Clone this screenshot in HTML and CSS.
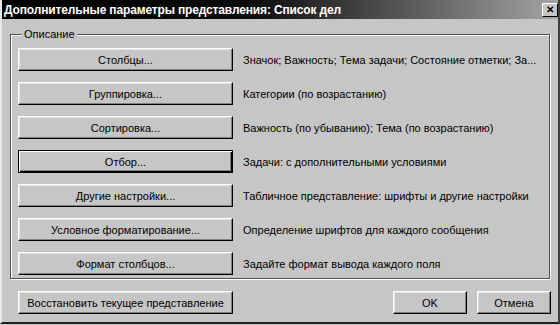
FILE: index.html
```html
<!DOCTYPE html>
<html lang="ru">
<head>
  <meta charset="UTF-8" />
  <title>Дополнительные параметры представления</title>
  <link rel="stylesheet" href="styles.css">
</head>
<body>
  <div class="window">
    <div class="titlebar">
      <span class="title">Дополнительные параметры представления: Список дел</span>
      <span class="close">✕</span>
    </div>

    <div class="content">
      <fieldset class="group">
        <legend>Описание</legend>
        <div class="row">
          <button class="btn wide">Столбцы...</button>
          <span class="desc">Значок; Важность; Тема задачи; Состояние отметки; За...</span>
        </div>
        <div class="row">
          <button class="btn wide">Группировка...</button>
          <span class="desc">Категории (по возрастанию)</span>
        </div>
        <div class="row">
          <button class="btn wide">Сортировка...</button>
          <span class="desc">Важность (по убыванию); Тема (по возрастанию)</span>
        </div>
        <div class="row">
          <button class="btn wide default">Отбор...</button>
          <span class="desc">Задачи: с дополнительными условиями</span>
        </div>
        <div class="row">
          <button class="btn wide">Другие настройки...</button>
          <span class="desc">Табличное представление: шрифты и другие настройки</span>
        </div>
        <div class="row">
          <button class="btn wide">Условное форматирование...</button>
          <span class="desc">Определение шрифтов для каждого сообщения</span>
        </div>
        <div class="row">
          <button class="btn wide">Формат столбцов...</button>
          <span class="desc">Задайте формат вывода каждого поля</span>
        </div>
      </fieldset>

      <div class="footer">
        <button class="btn wide">Восстановить текущее представление</button>
        <div class="spacer"></div>
        <button class="btn small">OK</button>
        <button class="btn small">Отмена</button>
      </div>
    </div>
  </div>
</body>
</html>
```

FILE: styles.css
```css
body {
  margin: 0;
  padding: 0;
  background: #c6c6c6;
  font-family: 'Liberation Sans', Arial, sans-serif;
  font-size: 11px;
  color: #000;
}
.window {
  width: 560px;
  height: 324px;
  box-sizing: border-box;
  background: #c6c6c6;
  border-left: 2px solid #e8e8e8;
  border-right: 2px solid #404040;
  border-bottom: 2px solid #202020;
}
.titlebar {
  height: 19px;
  display: flex;
  align-items: center;
  padding: 0 0 0 2px;
  background: linear-gradient(to right, #000 0%, #0c0c0c 45%, #a4a4a4 100%);
}
.title {
  flex: 1;
  color: #fff;
  font-weight: bold;
  font-size: 12px;
  letter-spacing: -0.15px;
}
.close {
  width: 16px;
  height: 14px;
  box-sizing: border-box;
  background: #c6c6c6;
  border-top: 1px solid #fff;
  border-left: 1px solid #fff;
  border-right: 1px solid #000;
  border-bottom: 1px solid #000;
  font-size: 10px;
  font-weight: bold;
  line-height: 12px;
  text-align: center;
  color: #000;
}
.content {
  padding: 9px 7px 0 8px;
}
.group {
  margin: 0;
  width: 540px;
  box-sizing: border-box;
  padding: 7px 7px 3px 7px;
  border: 1px solid #505050;
  box-shadow: 1px 1px 0 #fff, inset 1px 1px 0 #fff;
  display: flex;
  flex-direction: column;
  gap: 11px;
}
.group legend {
  padding: 0 2px;
  margin-left: 4px;
  line-height: 13px;
  background: #c6c6c6;
}
.row {
  display: flex;
  align-items: center;
  gap: 10px;
}
.desc {
  white-space: nowrap;
}
.btn {
  height: 23px;
  box-sizing: border-box;
  padding: 0;
  background: #c6c6c6;
  font-family: inherit;
  font-size: 11px;
  color: #000;
  border-top: 1px solid #fff;
  border-left: 1px solid #fff;
  border-right: 1px solid #000;
  border-bottom: 1px solid #000;
  box-shadow: inset -1px -1px #808080, inset 1px 1px #e2e2e2;
}
.btn.wide {
  width: 215px;
}
.btn.small {
  width: 74px;
}
.btn.default {
  border: 1px solid #000;
  box-shadow: inset 1px 1px #fff, inset -1px -1px #000, inset -2px -2px #808080;
}
.footer {
  display: flex;
  gap: 10px;
  margin-top: 12px;
  padding-left: 8px;
}
.spacer {
  flex: 1;
}
```
